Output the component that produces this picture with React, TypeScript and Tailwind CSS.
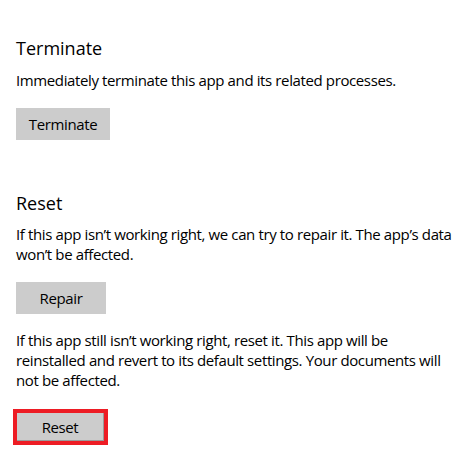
export default function App() {
  return (
    <div className="min-h-[471px] w-[459px] overflow-hidden bg-white pl-4 pt-9 font-['Open_Sans',sans-serif] text-black">
      <section>
        <h2 className="text-[18px] leading-6">Terminate</h2>
        <p className="mt-[10px] text-[15px] leading-5 tracking-[-0.38px]">
          Immediately terminate this app and its related processes.
        </p>
        <button className="mt-[18px] h-8 w-[94px] bg-[#cccccc] text-[15px] leading-5 tracking-[-0.38px]">
          Terminate
        </button>
      </section>

      <section className="mt-[51px]">
        <h2 className="text-[18px] leading-6">Reset</h2>
        <p className="mt-[9px] whitespace-nowrap text-[15px] leading-5 tracking-[-0.38px]">
          If this app isn’t working right, we can try to repair it. The app’s data
          <br />
          won’t be affected.
        </p>
        <button className="mt-[18px] h-8 w-[90px] bg-[#cccccc] text-[15px] leading-5 tracking-[-0.38px]">
          Repair
        </button>
        <p className="mt-4 whitespace-nowrap text-[15px] leading-5 tracking-[-0.38px]">
          If this app still isn’t working right, reset it. This app will be
          <br />
          reinstalled and revert to its default settings. Your documents will
          <br />
          not be affected.
        </p>
        <div className="-ml-[3px] mt-[19px] w-[95px] border-4 border-[#ed1c24]">
          <button className="block h-7 w-full border-b border-r border-[#9a9a9a] bg-[#cccccc] text-[15px] leading-5 tracking-[-0.38px]">
            Reset
          </button>
        </div>
      </section>
    </div>
  )
}
